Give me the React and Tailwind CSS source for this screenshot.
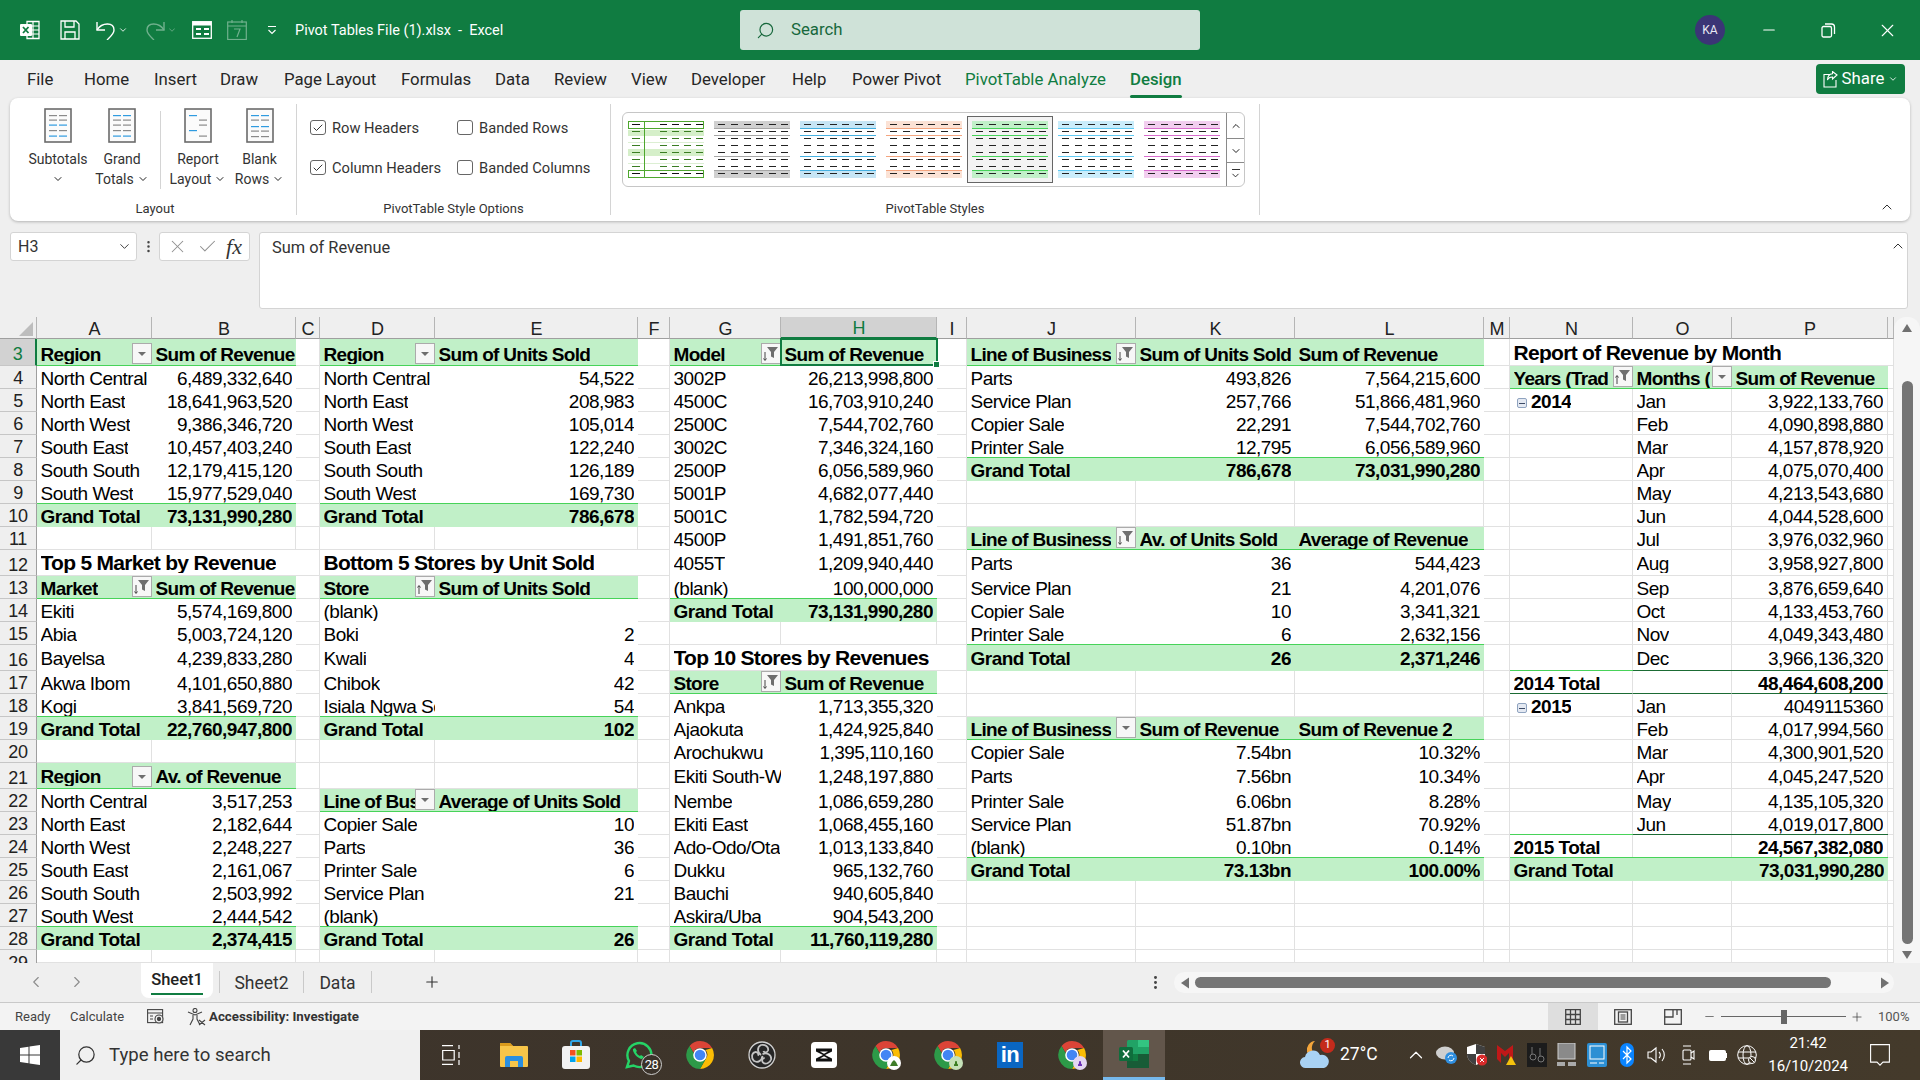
import React from "react";
import { ChevronDown, ChevronUp, ChevronLeft, ChevronRight, Search, X, Check, Plus, Minus, MoreVertical } from "lucide-react";

const COLS = ["A","B","C","D","E","F","G","H","I","J","K","L","M","N","O","P","Q"];
const ROWS = [3,4,5,6,7,8,9,10,11,12,13,14,15,16,17,18,19,20,21,22,23,24,25,26,27,28,29];

const cells = {};
const put = (c, r, t, k, o = {}) => { cells[c + r] = { t, k, ...o }; };
const pair = (a, b, start, list) => list.forEach(([x, y], i) => { put(a, start + i, x, "d"); put(b, start + i, y, "n"); });
const total = (a, cs, r, t, v) => { put(a, r, t, "tl"); cs.forEach((c, i) => put(c, r, v[i], "tr")); };

put("A",3,"Region","h",{btn:"drop"}); put("B",3,"Sum of Revenue","h");
pair("A","B",4,[["North Central","6,489,332,640"],["North East","18,641,963,520"],["North West","9,386,346,720"],["South East","10,457,403,240"],["South South","12,179,415,120"],["South West","15,977,529,040"]]);
total("A",["B"],10,"Grand Total",["73,131,990,280"]);
put("A",12,"Top 5 Market by Revenue","ttl",{span:2}); put("B",12,null,"skip");
put("A",13,"Market","h",{btn:"down"}); put("B",13,"Sum of Revenue","h");
pair("A","B",14,[["Ekiti","5,574,169,800"],["Abia","5,003,724,120"],["Bayelsa","4,239,833,280"],["Akwa Ibom","4,101,650,880"],["Kogi","3,841,569,720"]]);
total("A",["B"],19,"Grand Total",["22,760,947,800"]);
put("A",21,"Region","h",{btn:"drop"}); put("B",21,"Av. of Revenue","h");
pair("A","B",22,[["North Central","3,517,253"],["North East","2,182,644"],["North West","2,248,227"],["South East","2,161,067"],["South South","2,503,992"],["South West","2,444,542"]]);
total("A",["B"],28,"Grand Total",["2,374,415"]);

put("D",3,"Region","h",{btn:"drop"}); put("E",3,"Sum of Units Sold","h");
pair("D","E",4,[["North Central","54,522"],["North East","208,983"],["North West","105,014"],["South East","122,240"],["South South","126,189"],["South West","169,730"]]);
total("D",["E"],10,"Grand Total",["786,678"]);
put("D",12,"Bottom 5 Stores by Unit Sold","ttl",{span:2}); put("E",12,null,"skip");
put("D",13,"Store","h",{btn:"up"}); put("E",13,"Sum of Units Sold","h");
pair("D","E",14,[["(blank)",""],["Boki","2"],["Kwali","4"],["Chibok","42"],["Isiala Ngwa South","54"]]);
total("D",["E"],19,"Grand Total",["102"]);
put("D",22,"Line of Bus","h",{btn:"drop"}); put("E",22,"Average of Units Sold","h");
pair("D","E",23,[["Copier Sale","10"],["Parts","36"],["Printer Sale","6"],["Service Plan","21"],["(blank)",""]]);
total("D",["E"],28,"Grand Total",["26"]);

put("G",3,"Model","h",{btn:"down"}); put("H",3,"Sum of Revenue","h",{active:true});
pair("G","H",4,[["3002P","26,213,998,800"],["4500C","16,703,910,240"],["2500C","7,544,702,760"],["3002C","7,346,324,160"],["2500P","6,056,589,960"],["5001P","4,682,077,440"],["5001C","1,782,594,720"],["4500P","1,491,851,760"],["4055T","1,209,940,440"],["(blank)","100,000,000"]]);
total("G",["H"],14,"Grand Total",["73,131,990,280"]);
put("G",16,"Top 10 Stores by Revenues","ttl",{span:2}); put("H",16,null,"skip");
put("G",17,"Store","h",{btn:"down"}); put("H",17,"Sum of Revenue","h");
pair("G","H",18,[["Ankpa","1,713,355,320"],["Ajaokuta","1,424,925,840"],["Arochukwu","1,395,110,160"],["Ekiti South-West","1,248,197,880"],["Nembe","1,086,659,280"],["Ekiti East","1,068,455,160"],["Ado-Odo/Ota","1,013,133,840"],["Dukku","965,132,760"],["Bauchi","940,605,840"],["Askira/Uba","904,543,200"]]);
total("G",["H"],28,"Grand Total",["11,760,119,280"]);

const triple = (start, list) => list.forEach(([a,b,c], i) => { put("J",start+i,a,"d"); put("K",start+i,b,"n"); put("L",start+i,c,"n"); });
put("J",3,"Line of Business","h",{btn:"down"}); put("K",3,"Sum of Units Sold","h"); put("L",3,"Sum of Revenue","h");
triple(4,[["Parts","493,826","7,564,215,600"],["Service Plan","257,766","51,866,481,960"],["Copier Sale","22,291","7,544,702,760"],["Printer Sale","12,795","6,056,589,960"]]);
total("J",["K","L"],8,"Grand Total",["786,678","73,031,990,280"]);
put("J",11,"Line of Business","h",{btn:"down"}); put("K",11,"Av. of Units Sold","h"); put("L",11,"Average of Revenue","h");
triple(12,[["Parts","36","544,423"],["Service Plan","21","4,201,076"],["Copier Sale","10","3,341,321"],["Printer Sale","6","2,632,156"]]);
total("J",["K","L"],16,"Grand Total",["26","2,371,246"]);
put("J",19,"Line of Business","h",{btn:"drop"}); put("K",19,"Sum of Revenue","h"); put("L",19,"Sum of Revenue 2","h");
triple(20,[["Copier Sale","7.54bn","10.32%"],["Parts","7.56bn","10.34%"],["Printer Sale","6.06bn","8.28%"],["Service Plan","51.87bn","70.92%"],["(blank)","0.10bn","0.14%"]]);
total("J",["K","L"],25,"Grand Total",["73.13bn","100.00%"]);

put("N",3,"Report of Revenue by Month","ttl",{span:3}); put("O",3,null,"skip"); put("P",3,null,"skip");
put("N",4,"Years (Trad","h",{btn:"up"}); put("O",4,"Months (","h",{btn:"drop"}); put("P",4,"Sum of Revenue","h");
const months = (start, list) => list.forEach(([m, v], i) => { put("O",start+i,m,"gl"); put("P",start+i,v,"gr"); });
months(5,[["Jan","3,922,133,760"],["Feb","4,090,898,880"],["Mar","4,157,878,920"],["Apr","4,075,070,400"],["May","4,213,543,680"],["Jun","4,044,528,600"],["Jul","3,976,032,960"],["Aug","3,958,927,800"],["Sep","3,876,659,640"],["Oct","4,133,453,760"],["Nov","4,049,343,480"],["Dec","3,966,136,320"]]);
put("N",5,"2014","yr");
put("N",17,"2014 Total","sl"); put("O",17,"","sm"); put("P",17,"48,464,608,200","sr");
months(18,[["Jan","4049115360"],["Feb","4,017,994,560"],["Mar","4,300,901,520"],["Apr","4,045,247,520"],["May","4,135,105,320"],["Jun","4,019,017,800"]]);
put("N",18,"2015","yr");
put("N",24,"2015 Total","sl"); put("O",24,"","sm"); put("P",24,"24,567,382,080","sr");
put("N",25,"Grand Total","tl"); put("O",25,"","tl"); put("P",25,"73,031,990,280","tr");

function FilterBtn({ kind }) {
  return (
    <span className="absolute right-0 bottom-[1px] z-[5] flex h-[21px] w-[20px] items-center justify-center border border-[#ababab] bg-[#f7f7f7]">
      <svg width="18" height="19" viewBox="0 0 18 19">
        {kind === "drop" && <path d="M5 8h8l-4 4z" fill="#6e6e6e" />}
        {kind !== "drop" && <path d="M5 3h11l-4 5v6l-3-1.500V8z" fill="#6e6e6e" />}
        {kind === "down" && <path d="M3 8v8M1.500 14.500L3 16.500l1.500-2" stroke="#444" fill="none" />}
        {kind === "up" && <path d="M3 17V9M1.500 10.500L3 8.500l1.500 2" stroke="#444" fill="none" />}
      </svg>
    </span>
  );
}

const cellClass = {
  blank: "border-r border-b border-[#e1e1e1]",
  h: "bg-[#c1f0c8] font-bold tracking-[-0.7px] border-b border-[#47d359] pl-[3.5px] items-end",
  d: "bg-white pl-[3.5px] items-end pb-[1px]",
  n: "bg-white pr-[4px] justify-end items-end pb-[1px]",
  tl: "bg-[#c1f0c8] font-bold pl-[3.5px] items-end pb-[1px] shadow-[0_-1px_0_#47d359]",
  tr: "bg-[#c1f0c8] font-bold pr-[4px] justify-end items-end pb-[1px] shadow-[0_-1px_0_#47d359]",
  ttl: "font-bold pl-[3.5px] text-[21px] tracking-[-0.7px] items-center border-b border-[#e1e1e1]",
  gl: "border-r border-b border-[#e1e1e1] pl-[3.5px] items-end",
  gr: "border-r border-b border-[#e1e1e1] pr-[4px] justify-end items-end",
  yr: "border-r border-b border-[#e1e1e1] pl-[7px] font-bold items-end",
  sl: "border-r border-b border-r-[#e1e1e1] border-b-[#1b6b34] pl-[3.5px] font-bold items-end shadow-[0_-1px_0_#47d359]",
  sm: "border-r border-b border-r-[#e1e1e1] border-b-[#1b6b34] shadow-[0_-1px_0_#1b6b34]",
  sr: "border-b border-r border-r-[#e1e1e1] border-b-[#1b6b34] pr-[4px] justify-end items-end font-bold shadow-[0_-1px_0_#1b6b34]",
};

function Cell({ id }) {
  const c = cells[id];
  if (!c) return <div className={cellClass.blank} />;
  if (c.k === "skip") return null;
  const row = parseInt(id.slice(1), 10);
  const spanCls = c.span === 2 ? "col-span-2" : c.span === 3 ? "col-span-3" : "";
  const clip = c.active ? "overflow-visible relative" : "overflow-hidden relative";
  const lift = c.k === "ttl" ? "" : row === 12 || row === 16 || row === 21 ? "mb-[2px]" : row === 3 ? "mb-[1px]" : "";
  return (
    <div className={`flex min-w-0 whitespace-nowrap leading-none ${clip} ${spanCls} ${c.btn ? "pr-[20px]" : ""} ${cellClass[c.k]}`}>
      {c.k === "yr" && (
        <span className="mr-[4px] mb-[3px] flex h-[10px] w-[10px] items-center justify-center rounded-[2px] border border-[#8fa3bf] bg-[#e4e9f2]">
          <span className="h-[1px] w-[6px] bg-[#3c4a66]" />
        </span>
      )}
      <span className={`min-w-0 overflow-hidden ${lift}`}>{c.t}</span>
      {c.btn && <FilterBtn kind={c.btn} />}
      {c.active && (
        <span className="absolute -top-[1px] -right-[1px] -bottom-[1px] -left-[1px] z-10 border-2 border-[#107c41]">
          <span className="absolute -right-[4px] -bottom-[4px] h-[7px] w-[7px] border border-white bg-[#107c41]" />
        </span>
      )}
    </div>
  );
}

function Sheet() {
  return (
    <div className="flex h-[646px] w-[1920px] shrink-0">
      <div className="grid h-[646px] w-[1894px] grid-cols-[37px_115px_144px_24px_115px_203px_32px_111px_156px_30px_169px_159px_189px_26px_123px_99px_156px_6px] grid-rows-[22px_27px_repeat(8,23px)_26px_23px_23px_23px_26px_23px_23px_23px_23px_26px_repeat(7,23px)_13px] bg-white font-['Liberation_Sans',Arial,sans-serif] text-[19px] tracking-[-0.5px] text-black">
        <div className="relative border-r border-b border-r-[#b5b5b5] border-b-[#9f9f9f] bg-[#efefef]">
          <svg className="absolute top-[5px] left-[19px]" width="14" height="14" viewBox="0 0 14 14"><path d="M14 0v14H0z" fill="#bdbdbd" /></svg>
        </div>
        {COLS.map((c) => (
          <div key={c} className={c === "H"
            ? "flex items-end justify-center border-r border-b-2 border-r-[#b5b5b5] border-b-[#107c41] bg-[#d2d2d2] pl-[1px] text-[18px] leading-[17px] tracking-[-0.2px] text-[#107c41]"
            : "flex items-end justify-center border-r border-b border-r-[#b5b5b5] border-b-[#9f9f9f] bg-[#efefef] pl-[1px] text-[18px] leading-[17px] tracking-[-0.2px] text-[#222]"}>
            {c === "Q" ? "" : c}
          </div>
        ))}
        {ROWS.map((r) => (
          <React.Fragment key={r}>
            <div className={r === 3
              ? "flex items-end justify-center overflow-hidden border-r-2 border-b border-r-[#107c41] border-b-[#c6c6c6] bg-[#d2d2d2] text-[18px] leading-[21px] tracking-[-0.3px] text-[#107c41]"
              : r === 29
              ? "flex items-start justify-center overflow-hidden border-r border-r-[#9f9f9f] bg-[#efefef] pt-[4px] text-[18px] leading-[18px] tracking-[-0.3px] text-[#222]"
              : "flex items-end justify-center overflow-hidden border-r border-b border-r-[#9f9f9f] border-b-[#c6c6c6] bg-[#efefef] text-[18px] leading-[19px] tracking-[-0.3px] text-[#222]"}>
              {r}
            </div>
            {COLS.map((c) => <Cell key={c} id={c + r} />)}
          </React.Fragment>
        ))}
      </div>
      <div className="flex w-[26px] flex-col items-center rounded-t-xl bg-[#f6f6f6] pt-[7px]">
        <svg width="12" height="9" viewBox="0 0 12 9"><path d="M6 0l5 8H1z" fill="#707070" /></svg>
        <div className="mt-[48px] h-[563px] w-[11px] rounded-full bg-[#757575]" />
        <svg className="mt-[6px]" width="12" height="9" viewBox="0 0 12 9"><path d="M6 9L1 1h10z" fill="#707070" /></svg>
      </div>
    </div>
  );
}

function Thumb({ band, line, sel, first }) {
  const dashes = [3, 16, 29, 41, 54, 66];
  const ys = [3.5, 10.5, 17.5, 24.5, 31.5, 38.5, 45.5, 52.5];
  if (first) {
    return (
      <svg width="76" height="57" viewBox="0 0 76 57" className="shrink-0">
        <rect x="0" y="9" width="76" height="6" fill="#d5efc9" />
        <rect x="0" y="28" width="76" height="7" fill="#d5efc9" />
        <rect x="0" y="21" width="76" height="1" fill="#dcefd3" />
        <rect x="0" y="42" width="76" height="1" fill="#dcefd3" />
        <path d="M16.500 0v57" stroke="#4ea72e" />
        {ys.map((y, i) => dashes.slice(0, 5).map((x, j) => {
          const xx = j === 0 ? 4 : 14 + j * 12 + 6;
          return <rect key={`${i}-${j}`} x={xx} y={y - 0.5} width={j === 0 ? 8 : 7} height="1" fill={i === 0 || i === 7 ? "#111" : "#3a7d22"} />;
        }))}
        <rect x="0.5" y="0.5" width="75" height="7" fill="none" stroke="#4ea72e" />
        <rect x="0.5" y="49.5" width="75" height="7" fill="none" stroke="#4ea72e" />
      </svg>
    );
  }
  const wrap = sel ? "shrink-0 bg-[#f3f3f3] shadow-[0_0_0_4px_#f3f3f3,0_0_0_5px_#666666]" : "shrink-0";
  return (
    <svg width="76" height="57" viewBox="0 0 76 57" className={wrap}>
      <rect width="76" height="7.5" fill={band} />
      <rect y="49" width="76" height="8" fill={band} />
      {[7, 14, 35, 49].map((y) => <rect key={y} y={y} width="76" height="1" fill={line} />)}
      {ys.map((y, i) => dashes.map((x, j) => <rect key={`${i}-${j}`} x={x + 1} y={y - 0.5} width="7" height="1" fill="#222" />))}
    </svg>
  );
}

function PivotIcon({ rows }) {
  return (
    <svg width="28" height="35" viewBox="0 0 28 35">
      <rect x="1" y="1" width="26" height="33" fill="#fbfbfb" stroke="#6b6b6b" strokeWidth="1.6" />
      {rows.map(([y, c, a, b], i) => (
        <g key={i}>
          {a && <rect x="5" y={y} width="8" height="1.2" fill={c} />}
          {b && <rect x="15" y={y} width="8" height="1.2" fill={c} />}
        </g>
      ))}
    </svg>
  );
}

const G = "#8a8a8a", B = "#2f9be0";

function RibbonBtn({ rows, l1, l2, w }) {
  return (
    <div className={`flex flex-col items-center ${w}`}>
      <PivotIcon rows={rows} />
      <div className="mt-[6px] text-[14px] leading-[20px] whitespace-nowrap">{l1}</div>
      <div className="flex h-[20px] items-center gap-[3px] text-[14px] leading-[20px] whitespace-nowrap">
        {l2}<ChevronDown size={12} strokeWidth={2} color="#222" />
      </div>
    </div>
  );
}

function Cb({ label, on }) {
  return (
    <div className="flex items-center gap-[6px]">
      <span className="flex h-[15px] w-[16px] items-center justify-center rounded-[3px] border border-[#666] bg-white">
        {on && <Check size={12} strokeWidth={2} color="#333" />}
      </span>
      <span className="text-[14.7px] whitespace-nowrap">{label}</span>
    </div>
  );
}

function TitleBar() {
  return (
    <div className="flex h-[60px] w-[1920px] shrink-0 items-center bg-[#107c41] text-white">
      <svg className="ml-[20px]" width="20" height="20" viewBox="0 0 20 20" fill="none">
        <path d="M7 1.500h12v17H7z" stroke="#fff" strokeWidth="1.3" />
        <path d="M13 1.500v17M7 6h12M7 10h12M7 14h12" stroke="#fff" strokeWidth="1.2" />
        <rect x="0" y="4" width="12" height="12" rx="1" fill="#fff" />
        <path d="M3 7l5.500 6M8.500 7L3 13" stroke="#107c41" strokeWidth="1.8" />
      </svg>
      <svg className="ml-[20px]" width="20" height="20" viewBox="0 0 20 20" fill="none" stroke="#fff" strokeWidth="1.3">
        <path d="M1 1h15l3 3v15H1z" /><path d="M5 1v6h9V1M5 19v-7h10v7" />
      </svg>
      <svg className="ml-[16px]" width="20" height="20" viewBox="0 0 20 20" fill="none" stroke="#fff" strokeWidth="1.4">
        <path d="M1 2v8h8" /><path d="M1 10C6 2 18 2 18 10c0 4-4 7-7 10" />
      </svg>
      <ChevronDown className="ml-[2px]" size={10} strokeWidth={2} />
      <svg className="ml-[17px] opacity-40" width="20" height="20" viewBox="0 0 20 20" fill="none" stroke="#fff" strokeWidth="1.4">
        <path d="M19 2v8h-8" /><path d="M19 10C14 2 2 2 2 10c0 4 4 7 7 10" />
      </svg>
      <ChevronDown className="ml-[2px] opacity-40" size={10} strokeWidth={2} />
      <svg className="ml-[15px]" width="20" height="18" viewBox="0 0 20 18" fill="none">
        <rect x="0.7" y="0.7" width="18.6" height="16.6" stroke="#fff" strokeWidth="1.3" />
        <rect x="1" y="1" width="18" height="3.5" fill="#fff" />
        <path d="M4 8h5M12 8h5M4 13h5M12 13h5" stroke="#fff" strokeWidth="2" />
      </svg>
      <svg className="ml-[15px] opacity-40" width="20" height="20" viewBox="0 0 20 20" fill="none" stroke="#fff" strokeWidth="1.2">
        <rect x="0.7" y="2" width="18.6" height="17.5" /><path d="M1 6h18M5 0v3M15 0v3M7 9h6l-3 8" />
      </svg>
      <svg className="ml-[20px]" width="10" height="10" viewBox="0 0 10 10" fill="none" stroke="#fff" strokeWidth="1.1">
        <path d="M1 1.500h8M1.500 5L5 8.500 8.500 5" />
      </svg>
      <div className="ml-[18px] w-[445px] pt-[1px] font-['Roboto',sans-serif] text-[14.5px] whitespace-pre">Pivot Tables File (1).xlsx  -  Excel</div>
      <div className="flex h-[40px] w-[460px] items-center rounded-[3px] bg-[#cfe2d8] text-[#17683c]">
        <Search className="ml-[16px] -scale-x-100" size={19} strokeWidth={1.5} />
        <span className="ml-[16px] font-['Roboto',sans-serif] text-[16.8px]">Search</span>
      </div>
      <div className="ml-[495px] flex h-[30px] w-[30px] items-center justify-center rounded-full bg-[#3b3576] font-['Roboto',sans-serif] text-[12px] text-[#e8e8f5]">KA</div>
      <Minus className="ml-[35px]" size={18} strokeWidth={1.5} />
      <svg className="ml-[43px]" width="15" height="15" viewBox="0 0 15 15" fill="none" stroke="#fff" strokeWidth="1.3">
        <rect x="1" y="3.500" width="9.500" height="10.500" rx="1.500" /><path d="M4 1h6.500A3 3 0 0 1 13.500 4v7" />
      </svg>
      <X className="ml-[41px]" size={21} strokeWidth={1.3} />
    </div>
  );
}

const tabs = [
  ["File", "w-[57px]", ""], ["Home", "w-[70px]", ""], ["Insert", "w-[66px]", ""], ["Draw", "w-[64px]", ""],
  ["Page Layout", "w-[117px]", ""], ["Formulas", "w-[94px]", ""], ["Data", "w-[59px]", ""], ["Review", "w-[77px]", ""],
  ["View", "w-[60px]", ""], ["Developer", "w-[101px]", ""], ["Help", "w-[60px]", ""], ["Power Pivot", "w-[113px]", ""],
  ["PivotTable Analyze", "w-[165px]", "text-[#107c41]"],
];

function TabStrip() {
  return (
    <div className="flex h-[38px] w-[1920px] shrink-0 items-center bg-[#efefef] pt-[2px] pl-[27px] font-['Roboto',sans-serif] text-[16.8px] text-[#262626]">
      {tabs.map(([t, w, c]) => <div key={t} className={`${w} ${c} whitespace-nowrap`}>{t}</div>)}
      <div className="relative w-[52px] font-medium whitespace-nowrap text-[#107c41]">
        Design
        <span className="absolute -bottom-[5px] left-0 h-[2.500px] w-[52px] rounded bg-[#107c41]" />
      </div>
      <div className="-mt-[2px] ml-[634px] flex h-[30px] w-[89px] items-center justify-center gap-[4px] rounded-[4px] bg-[#107c41] text-white">
        <svg width="15" height="17" viewBox="0 0 15 17" fill="none" stroke="#fff" strokeWidth="1.1">
          <path d="M7 3.500H1v12.500h12v-7" /><path d="M14 4L9.500 0.500v2.200C6 3 4.500 5.500 4.500 9c1-2.500 2.500-3 5-3v2z" />
        </svg>
        <span>Share</span>
        <ChevronDown size={10} strokeWidth={2} />
      </div>
    </div>
  );
}

function Ribbon() {
  return (
    <div className="mx-[10px] flex h-[123px] w-[1900px] shrink-0 rounded-lg bg-white font-['Roboto',sans-serif] text-[#333] shadow-[0_1px_3px_rgba(0,0,0,0.25)]">
      <div className="flex h-full w-[286px] flex-col items-center">
        <div className="flex w-full flex-1 pt-[10px] pl-[16px]">
          <RibbonBtn w="w-[64px]" l1="Subtotals" l2="" rows={[[7,G,1,1],[11.5,G,1,1],[16.5,B,1,1],[22,G,1,1],[27.5,B,1,1]]} />
          <RibbonBtn w="w-[64px]" l1="Grand" l2="Totals" rows={[[7,B,1,1],[11.5,G,1,1],[16.5,G,1,1],[22,G,1,1],[27.5,B,1,1]]} />
          <div className="mx-[6px] mt-[3px] h-[78px] w-px bg-[#d4d4d4]" />
          <RibbonBtn w="w-[62px]" l1="Report" l2="Layout" rows={[[7,B,1,0],[11.5,G,0,1],[16.5,G,0,1],[22,B,1,0],[27.5,G,0,1]]} />
          <RibbonBtn w="w-[61px]" l1="Blank" l2="Rows" rows={[[7,B,1,1],[11.5,G,1,1],[18,B,1,1],[22.5,G,1,1],[28,G,1,1]]} />
        </div>
        <div className="mb-[3px] h-[18px] pl-[4px] text-[13px] leading-[18px]">Layout</div>
      </div>
      <div className="my-[6px] w-px bg-[#d4d4d4]" />
      <div className="flex h-full w-[313px] flex-col">
        <div className="grid flex-1 grid-cols-[147px_1fr] grid-rows-[40px_40px] items-center pt-[10px] pl-[13px]">
          <Cb label="Row Headers" on /><Cb label="Banded Rows" />
          <Cb label="Column Headers" on /><Cb label="Banded Columns" />
        </div>
        <div className="mb-[3px] h-[18px] text-center text-[13px] leading-[18px]">PivotTable Style Options</div>
      </div>
      <div className="my-[6px] w-px bg-[#d4d4d4]" />
      <div className="flex h-full w-[648px] flex-col">
        <div className="mt-[14px] ml-[11px] flex h-[75px] w-[623px] items-stretch rounded-md border border-[#c6c6c6]">
          <div className="flex flex-1 items-center gap-[10px] pl-[5px]">
            <Thumb first />
            <Thumb band="#d0d0d0" line="#a6a6a6" />
            <Thumb band="#c6e5f5" line="#45b0e1" />
            <Thumb band="#fbe2d5" line="#f4a57f" />
            <Thumb band="#c1f0c8" line="#47d359" sel />
            <Thumb band="#caedfb" line="#60caf3" />
            <Thumb band="#f2ceef" line="#d86dcd" />
          </div>
          <div className="flex w-[18px] flex-col rounded-r-md border-l border-[#8a8a8a]">
            <div className="flex h-[26px] items-center justify-center border-b border-[#8a8a8a]"><ChevronUp size={12} strokeWidth={2} color="#222" /></div>
            <div className="flex h-[24px] items-center justify-center border-b border-[#8a8a8a]"><ChevronDown size={12} strokeWidth={2} color="#222" /></div>
            <div className="flex h-[23px] flex-col items-center justify-center">
              <span className="h-px w-[8px] bg-[#333]" /><ChevronDown size={11} strokeWidth={2} color="#222" />
            </div>
          </div>
        </div>
        <div className="mt-auto mb-[3px] h-[18px] text-center text-[13px] leading-[18px]">PivotTable Styles</div>
      </div>
      <div className="my-[6px] w-px bg-[#d4d4d4]" />
      <div className="flex flex-1 items-end justify-end pr-[15px] pb-[6px]">
        <ChevronUp size={16} strokeWidth={1.5} color="#333" />
      </div>
    </div>
  );
}

function FormulaBar() {
  return (
    <div className="mt-[11px] flex h-[77px] w-[1920px] shrink-0 items-start pl-[10px] font-['Roboto',sans-serif] text-[#333]">
      <div className="flex h-[29px] w-[127px] items-center justify-between rounded-[3px] border border-[#d4d4d4] bg-white pr-[4px] pl-[7px] text-[16px]">
        H3<ChevronDown size={15} strokeWidth={1.5} />
      </div>
      <MoreVertical className="mt-[7px] ml-[4px]" size={15} strokeWidth={2} color="#444" />
      <div className="ml-[3px] flex h-[29px] w-[91px] items-center justify-between rounded-[3px] border border-[#d4d4d4] bg-white pr-[7px] pl-[7px]">
        <X size={21} strokeWidth={1.2} color="#8f8f8f" />
        <Check size={21} strokeWidth={1.2} color="#8f8f8f" />
        <span className="font-['Liberation_Serif',serif] text-[22px] leading-none text-[#333] italic">fx</span>
      </div>
      <div className="ml-[9px] flex h-[77px] w-[1649px] items-start justify-between rounded-[3px] border border-[#d4d4d4] bg-white pt-[3px] pr-[1px] pl-[12px] text-[16.4px]">
        <span>Sum of Revenue</span>
        <ChevronUp size={16} strokeWidth={1.5} className="mt-[2px]" />
      </div>
    </div>
  );
}

function SheetTabs() {
  return (
    <div className="flex h-[40px] w-[1920px] shrink-0 items-start border-b border-[#c9c9c9] bg-[#efefef] font-['Roboto',sans-serif] text-[#333]">
      <div className="flex h-[38px] w-[141px] items-center pl-[27px]">
        <ChevronLeft size={18} strokeWidth={1.5} color="#8c8c8c" />
        <ChevronRight className="ml-[23px]" size={18} strokeWidth={1.5} color="#8c8c8c" />
      </div>
      <div className="flex h-[35px] w-[72px] flex-col items-center rounded-b-lg bg-white pt-[6px] text-[16.5px] leading-[22px] font-medium text-[#222]">
        Sheet1
        <span className="mt-[2px] h-[2px] w-[52px] bg-[#107c41]" />
      </div>
      <div className="mt-[8px] ml-[6px] h-[22px] w-px bg-[#c9c9c9]" />
      <div className="mt-[9px] w-[83px] text-center text-[17.5px] leading-[22px]">Sheet2</div>
      <div className="mt-[8px] h-[22px] w-px bg-[#c9c9c9]" />
      <div className="mt-[9px] w-[67px] text-center text-[17.5px] leading-[22px]">Data</div>
      <div className="mt-[8px] h-[22px] w-px bg-[#c9c9c9]" />
      <Plus className="mt-[10px] ml-[51px]" size={18} strokeWidth={1.5} />
      <MoreVertical className="mt-[11px] ml-[706px]" size={17} strokeWidth={2.2} color="#444" />
      <div className="mt-[9px] ml-[10px] flex h-[21px] w-[720px] items-center rounded-full bg-[#f6f6f6] pl-[7px]">
        <svg width="9" height="12" viewBox="0 0 9 12"><path d="M0 6l8-5.500v11z" fill="#707070" /></svg>
        <div className="ml-[5px] h-[11px] w-[636px] rounded-full bg-[#757575]" />
        <svg className="ml-[49px]" width="9" height="12" viewBox="0 0 9 12"><path d="M9 6L1 .5v11z" fill="#707070" /></svg>
      </div>
    </div>
  );
}

function StatusBar() {
  return (
    <div className="flex h-[27px] w-[1920px] shrink-0 items-center bg-[#f3f3f3] font-['Roboto',sans-serif] text-[13px] text-[#444]">
      <span className="ml-[15px] w-[55px]">Ready</span>
      <span className="w-[77px]">Calculate</span>
      <svg width="18" height="16" viewBox="0 0 18 16" fill="none" stroke="#444" strokeWidth="1.1">
        <rect x="0.6" y="0.6" width="15" height="13" /><path d="M1 4h15M3 7h3M3 10h3" /><circle cx="12" cy="10" r="4" fill="#f3f3f3" /><circle cx="12" cy="10" r="1.600" fill="#444" />
      </svg>
      <svg className="ml-[22px]" width="19" height="18" viewBox="0 0 19 18" fill="none" stroke="#444" strokeWidth="1.1">
        <circle cx="8" cy="2.500" r="2" /><path d="M1 4l7 3 7-3M6 7v4l-3 6M10 7v4l3 6M12 12l6 5M18 12l-6 5" />
      </svg>
      <span className="ml-[3px] text-[13.3px] font-bold text-[#333]">Accessibility: Investigate</span>
      <div className="ml-auto flex h-full items-center">
        <div className="flex h-full w-[50px] items-center justify-center bg-[#dedede]">
          <svg width="16" height="16" viewBox="0 0 16 16" fill="none" stroke="#444" strokeWidth="1.3"><path d="M.7.7h14.600v14.600H.7zM5.500 1v14M10.500 1v14M1 5.500h14M1 10.500h14" /></svg>
        </div>
        <svg className="ml-[16px]" width="18" height="16" viewBox="0 0 18 16" fill="none" stroke="#444" strokeWidth="1.3"><rect x=".7" y=".7" width="16.600" height="14.600" /><rect x="4.500" y="3" width="9" height="10" /><path d="M6.500 6h5M6.500 8h5M6.500 10h5" strokeWidth="1" /></svg>
        <svg className="ml-[32px]" width="18" height="16" viewBox="0 0 18 16" fill="none" stroke="#444" strokeWidth="1.3"><rect x=".7" y=".7" width="16.600" height="14.600" /><path d="M9 1v7H1M13 1v5" /></svg>
        <Minus className="ml-[21px]" size={13} strokeWidth={1.3} color="#444" />
        <div className="relative ml-[5px] flex h-[14px] w-[125px] items-center">
          <span className="h-px w-full bg-[#666]" />
          <span className="absolute left-[60px] h-[14px] w-[6px] bg-[#666]" />
        </div>
        <Plus className="ml-[4px]" size={14} strokeWidth={1.3} color="#444" />
        <span className="ml-[14px] w-[31px] text-[13px] whitespace-nowrap text-[#555]">100%</span>
        <span className="w-[11px]" />
      </div>
    </div>
  );
}

function Chrome({ badge }) {
  return (
    <svg width="30" height="30" viewBox="0 0 30 30">
      <path d="M15 1a14 14 0 0 1 12.100 7H15a7 7 0 0 0-6.600 4.600L4.600 6A14 14 0 0 1 15 1z" fill="#db4437" />
      <path d="M27.100 8A14 14 0 0 1 15 29l6-10.400A7 7 0 0 0 20.500 10z" fill="#fbbc04" />
      <path d="M15 29A14 14 0 0 1 4.600 6l6 10.600A7 7 0 0 0 21 18.600z" fill="#2d9a48" />
      <circle cx="15" cy="15" r="6.800" fill="#fff" />
      <circle cx="15" cy="15" r="5.300" fill="#4285f4" />
      {badge && <circle cx="23" cy="23" r="7" fill={badge} />}
      {badge === "#c5e1b8" && <path d="M21 26h4v-1.500l-1-1v-1.500a1 1 0 0 0-2 0v1.500l-1 1z" fill="#3a7d22" />}
      {badge === "#e3d6f2" && <path d="M21 26h4v-1.500l-1-1v-1.500a1 1 0 0 0-2 0v1.500l-1 1z" fill="#6a2fb5" />}
      {badge === "#ffffff" && <path d="M19 26l2-4 2-2 2 2 2 4z" fill="#3f7d2a" />}
    </svg>
  );
}

const Slot = ({ children, active }) => (
  <div className={active
    ? "relative flex h-full w-[62px] items-center justify-center border-b-[3px] border-[#76b9ed] bg-[#62564b]"
    : "relative flex h-full w-[62px] items-center justify-center"}>{children}</div>
);

function Taskbar() {
  return (
    <div className="flex h-[50px] w-[1920px] shrink-0 items-center bg-linear-to-r from-[#3d342c] via-[#3e352a] to-[#443a2b] font-['Roboto',sans-serif] text-white">
      <div className="flex h-full w-[60px] items-center justify-center bg-[#393939]">
        <svg width="20" height="20" viewBox="0 0 20 20" fill="#fff"><path d="M0 3l8.500-1.300v7.800H0zM9.500 1.500L20 0v9.500H9.500zM0 10.500h8.500v7.800L0 17zM9.500 10.500H20V20L9.500 18.500z" /></svg>
      </div>
      <div className="flex h-full w-[360px] items-center bg-[#f0f0f0] text-[#333]">
        <Search className="ml-[14px] -scale-x-100" size={23} strokeWidth={1.3} />
        <span className="ml-[12px] pt-[1px] text-[18.6px] whitespace-nowrap">Type here to search</span>
      </div>
      <div className="flex h-full w-[63px] items-center justify-center">
        <svg width="20" height="20" viewBox="0 0 20 20" fill="none" stroke="#fff" strokeWidth="1.2"><path d="M0 .7h11M0 19.300h11M.7 5.500h11.500v9.500H.7zM17 0v4M17 7v6M17 15v5" /></svg>
      </div>
      <Slot>
        <svg width="28" height="26" viewBox="0 0 28 26"><path d="M0 2a1 1 0 0 1 1-1h9l3 3h14a1 1 0 0 1 1 1v19a1 1 0 0 1-1 1H1a1 1 0 0 1-1-1z" fill="#f7c549" /><path d="M0 2a1 1 0 0 1 1-1h9l3 3H0z" fill="#d99a1c" /><path d="M5 25v-9a2 2 0 0 1 2-2h14a2 2 0 0 1 2 2v9h-5v-6H10v6z" fill="#2a8fe0" /></svg>
      </Slot>
      <Slot>
        <svg width="30" height="30" viewBox="0 0 30 30"><path d="M10 6V3a2 2 0 0 1 2-2h6a2 2 0 0 1 2 2v3" fill="none" stroke="#2fa6e8" strokeWidth="2" /><rect x="1" y="6" width="28" height="23" rx="3" fill="#f2f2f2" /><rect x="9" y="10" width="5.500" height="5.500" fill="#f25022" /><rect x="15.500" y="10" width="5.500" height="5.500" fill="#7fba00" /><rect x="9" y="16.500" width="5.500" height="5.500" fill="#00a4ef" /><rect x="15.500" y="16.500" width="5.500" height="5.500" fill="#ffb900" /></svg>
      </Slot>
      <Slot>
        <svg width="30" height="30" viewBox="0 0 30 30" fill="none"><path d="M4 27l2-6a12 12 0 1 1 4.500 4.500z" stroke="#25d366" strokeWidth="2.4" /><path d="M10 9c-1 3 5 10 9 10l2-2-3-2-1 1c-2-1-3-2-4-4l1-1-2-3z" fill="#25d366" /></svg>
        <span className="absolute top-[24px] left-[34px] flex h-[21px] w-[21px] items-center justify-center rounded-full border border-[#cfcfcf] bg-[#3a322a] text-[13px] tracking-[-0.5px]">28</span>
      </Slot>
      <Slot><Chrome /></Slot>
      <Slot>
        <svg width="28" height="30" viewBox="0 0 28 30" fill="none">
          <circle cx="14" cy="15" r="13" fill="#262626" stroke="#d0d0d0" strokeWidth="1.3" />
          {[0, 120, 240].map((a) => (
            <path key={a} transform={`rotate(${a} 14 15)`} d="M13 15C9 12 9 7 13 5C17 4 21 7 20 10.500C19 13 16 13 15.500 11" stroke="#c4c4c4" strokeWidth="1.8" />
          ))}
        </svg>
      </Slot>
      <Slot>
        <svg width="26" height="26" viewBox="0 0 26 26"><rect width="26" height="26" rx="4" fill="#fff" /><path d="M5 6.500h16v3L14 13l7 3.500v3H5v-3L12 13 5 9.500z" fill="#111" /><path d="M9 9.500h8l-4 2.200zM9 16.500h8l-4-2.200z" fill="#fff" /></svg>
      </Slot>
      <Slot><Chrome badge="#ffffff" /></Slot>
      <Slot><Chrome badge="#c5e1b8" /></Slot>
      <Slot>
        <div className="flex h-[26px] w-[26px] items-center justify-center bg-[#0a66c2] font-['Liberation_Sans',sans-serif] text-[22px] leading-none font-bold tracking-[-0.5px] text-white">in</div>
      </Slot>
      <Slot><Chrome badge="#e3d6f2" /></Slot>
      <Slot active>
        <svg width="30" height="28" viewBox="0 0 30 28"><rect x="8" y="0" width="22" height="28" rx="1.500" fill="#21a366" /><rect x="19" y="0" width="11" height="7" fill="#33c481" /><rect x="8" y="14" width="11" height="7" fill="#107c41" /><rect x="19" y="14" width="11" height="7" fill="#185c37" /><rect x="8" y="21" width="22" height="7" fill="#185c37" /><rect x="0" y="7" width="14" height="14" rx="1.500" fill="#0f6d3c" /><path d="M4 10.500l6 7M10 10.500l-6 7" stroke="#fff" strokeWidth="1.8" /></svg>
      </Slot>
      <svg className="ml-[135px]" width="30" height="30" viewBox="0 0 30 30">
        <path d="M15 1a9 9 0 0 0-8 11 9 9 0 0 0 10 4 9 9 0 0 1-2-15z" fill="#f3a53b" />
        <path d="M6 28a5.500 5.500 0 0 1-1-11 8 8 0 0 1 15-2 6.500 6.500 0 0 1 4 13z" fill="#a9d2f3" />
      </svg>
      <span className="relative -top-[10px] -left-[10px] flex h-[15px] w-[15px] items-center justify-center rounded-full bg-[#c42b1c] text-[11px]">1</span>
      <span className="-ml-[5px] text-[17.5px] leading-none">27°C</span>
      <ChevronUp className="ml-[27px]" size={22} strokeWidth={1.3} />
      <svg className="ml-[9px]" width="21" height="18" viewBox="0 0 21 18"><ellipse cx="9" cy="7" rx="9" ry="6.500" fill="#cfcfcf" /><circle cx="15" cy="12" r="6" fill="#2f8fe0" /><path d="M12 12a3 3 0 0 1 5-2M18 12a3 3 0 0 1-5 2" stroke="#fff" fill="none" /></svg>
      <svg className="ml-[10px]" width="20" height="22" viewBox="0 0 20 22"><path d="M9 0l9 3v7c0 5-4 9-9 11-5-2-9-6-9-11V3z" fill="#fff" /><path d="M9 0v21C4 19 0 15 0 10h18V3z" fill="#1f1f1f" opacity="0.85" /><circle cx="15" cy="16" r="5.500" fill="#d92b2b" /><path d="M13 14l4 4M17 14l-4 4" stroke="#fff" /></svg>
      <svg className="ml-[10px]" width="20" height="22" viewBox="0 0 20 22"><path d="M0 1l8 6 8-6v14l-4 4V9L8 13 4 9v10l-4-4z" fill="#c01818" /><path d="M14 12l5 9h-10z" fill="#f4c20d" /></svg>
      <svg className="ml-[10px]" width="20" height="24" viewBox="0 0 20 24"><rect width="20" height="24" fill="#1c1c1c" /><circle cx="6" cy="14" r="3" stroke="#777" fill="none" /><circle cx="14" cy="16" r="3" stroke="#777" fill="none" /><path d="M5 4v7M13 5v8" stroke="#777" /></svg>
      <svg className="ml-[10px]" width="19" height="24" viewBox="0 0 19 24" fill="none"><rect x="1" y="0" width="17" height="16" fill="#8a8a8a" stroke="#d0d0d0" /><rect x="0" y="19" width="8" height="4" fill="#aaa" /><rect x="11" y="19" width="8" height="4" fill="#aaa" /></svg>
      <svg className="ml-[11px]" width="20" height="24" viewBox="0 0 20 24" fill="none"><rect width="20" height="24" rx="2" fill="#2c8fd4" /><rect x="3" y="3" width="14" height="13" stroke="#fff" /><path d="M3 20h7M12 20h5" stroke="#fff" /></svg>
      <svg className="ml-[13px]" width="14" height="24" viewBox="0 0 14 24" fill="none"><rect width="14" height="24" rx="7" fill="#0a84ff" /><path d="M3 8l8 8-4 4V4l4 4-8 8" stroke="#fff" strokeWidth="1.2" /></svg>
      <svg className="ml-[13px]" width="20" height="20" viewBox="0 0 20 20" fill="none" stroke="#fff" strokeWidth="1.1"><path d="M1 7h3l5-4v14l-5-4H1zM12 7a4 4 0 0 1 0 6M15 4a9 9 0 0 1 0 12" /></svg>
      <svg className="ml-[13px]" width="15" height="20" viewBox="0 0 15 20" fill="none" stroke="#fff" strokeWidth="1.1"><rect x="3" y="5" width="8" height="10" rx="1" /><path d="M11 8l3-2v8l-3-2M3 1h8M3 19h8" /></svg>
      <svg className="ml-[14px]" width="18" height="11" viewBox="0 0 18 11"><rect x=".5" y=".5" width="16" height="10" rx="1" fill="#fff" stroke="#fff" /><rect x="17" y="3" width="1" height="5" fill="#fff" /></svg>
      <svg className="ml-[10px]" width="20" height="20" viewBox="0 0 20 20" fill="none" stroke="#fff" strokeWidth="1"><circle cx="10" cy="10" r="9.300" /><ellipse cx="10" cy="10" rx="4" ry="9.300" /><path d="M1 7h18M1 13h18" /><circle cx="15" cy="15" r="3.500" fill="#3f3628" /><path d="M13 13l4 4" /></svg>
      <div className="ml-[14px] flex w-[75px] flex-col items-center text-[15px] leading-[23px] whitespace-nowrap">
        <span>21:42</span><span>16/10/2024</span>
      </div>
      <svg className="ml-[24px]" width="20" height="22" viewBox="0 0 20 22" fill="none" stroke="#fff" strokeWidth="1.1"><path d="M.6.6h18.800v17.500H13l-3 3-3-3H.6z" /></svg>
    </div>
  );
}

export default function App() {
  return (
    <div className="flex h-[1080px] w-[1920px] flex-col overflow-hidden bg-[#efefef]">
      <TitleBar />
      <TabStrip />
      <Ribbon />
      <FormulaBar />
      <div className="h-[8px] shrink-0" />
      <Sheet />
      <SheetTabs />
      <StatusBar />
      <Taskbar />
    </div>
  );
}
